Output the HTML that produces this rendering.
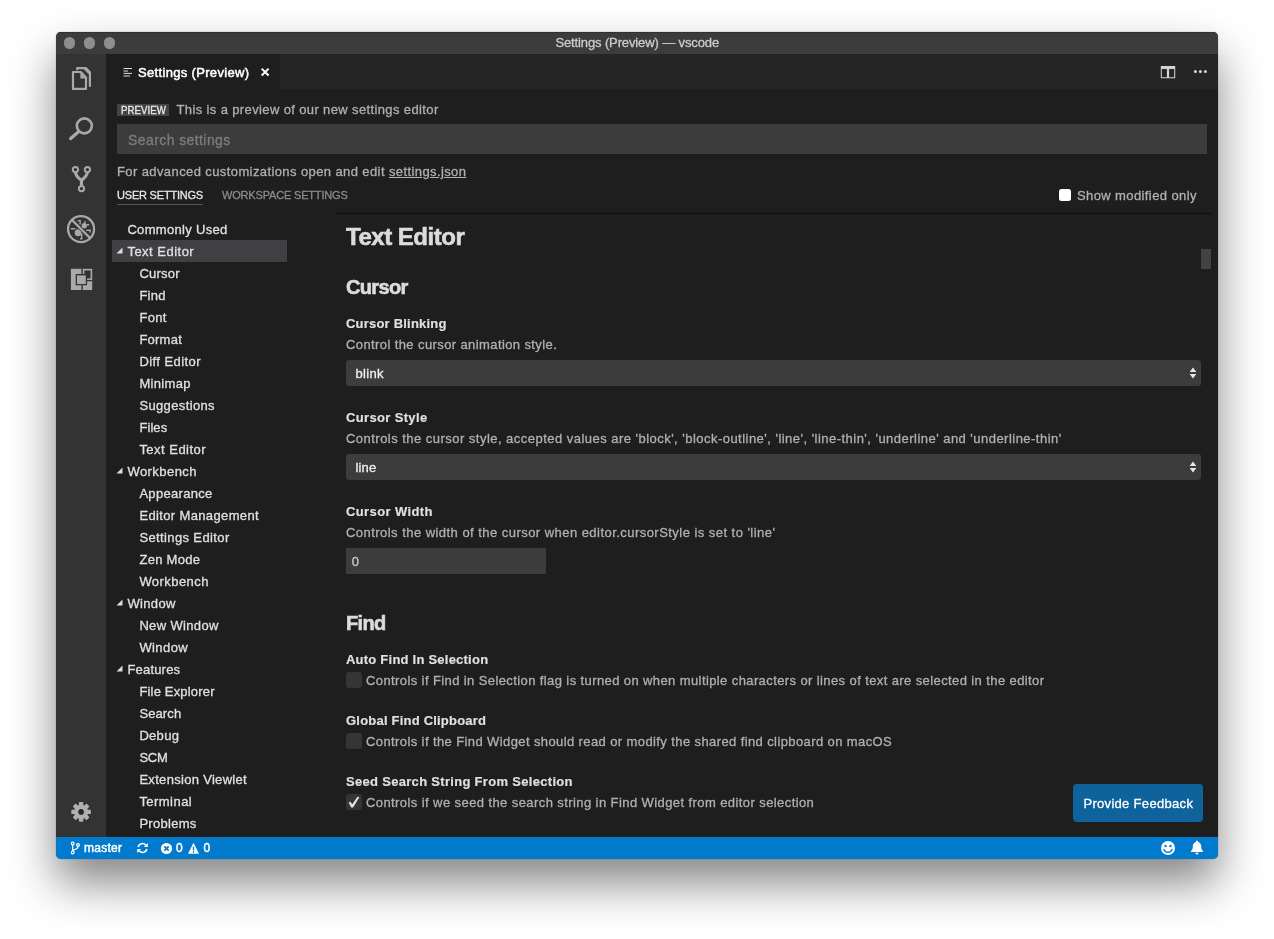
<!DOCTYPE html>
<html lang="en">
<head>
<meta charset="utf-8">
<title>Settings (Preview) — vscode</title>
<style>
*{box-sizing:border-box;margin:0;padding:0}
html,body{width:1274px;height:939px;background:#fff;overflow:hidden}
body{font-family:"Liberation Sans",sans-serif;font-size:13px;color:#ccc;position:relative}
.abs{position:absolute}
#win{position:absolute;left:56px;top:32px;width:1162px;height:827px;background:linear-gradient(#3c3c3c 0,#3c3c3c 20px,#1e1e1e 20px,#1e1e1e 807px,#007acc 807px);border-radius:5px;
 box-shadow:0 24px 46px rgba(0,0,0,.48),0 0 1px rgba(0,0,0,.6);}
#clip{position:absolute;inset:0;border-radius:5px;overflow:hidden;will-change:transform}
#titlebar{position:absolute;left:0;top:0;width:1162px;height:22px;background:#3c3c3c;box-shadow:inset 0 1px 0 #313131;text-align:center;line-height:22px;font-size:13px;color:#ccc}
.tl{position:absolute;top:5.450px;width:11.200px;height:11.200px;border-radius:50%;background:#8e8e90}
#activity{position:absolute;left:0;top:22px;width:50px;height:783px;background:#333}
#tabs{position:absolute;left:50px;top:22px;width:1112px;height:35px;background:#252526}
#tab{position:absolute;left:0;top:0;width:174px;height:35px;background:#1e1e1e;color:#fff}
#status{position:absolute;left:0;top:805px;width:1162px;height:22px;background:#007acc;color:#fff;font-size:12px;line-height:22px}
#status .t{-webkit-text-stroke:0.45px}
#tabt{-webkit-text-stroke:0.5px}
.t{position:absolute;white-space:nowrap;line-height:16px;-webkit-text-stroke:0.3px}
.tree .t{color:#e0e0e0;font-size:13px}
.h{font-weight:bold;color:#e0e0e0;-webkit-text-stroke:0.15px}
.hh{color:#dcdcdc;-webkit-text-stroke:0.6px}
.d{color:#b0b0b0}
.sel{position:absolute;left:290px;width:855px;height:26px;background:#3c3c3c;border-radius:3px}
.cb{position:absolute;left:290px;width:16px;height:16px;background:#353535;border-radius:3px}
</style>
</head>
<body>
<div id="win"><div id="clip">
 <div id="titlebar"><span class="t" id="ttl" style="left:499.400px;top:3px;letter-spacing:-0.122px">Settings (Preview) — vscode</span>
  <div class="tl" style="left:8.300px"></div><div class="tl" style="left:28.250px"></div><div class="tl" style="left:48.200px"></div>
 </div>
 <div id="activity"></div>
 <!-- activity bar icons -->
 <svg class="abs" style="left:0;top:22px" width="50" height="783" viewBox="0 22 50 783">
  <g fill="none" stroke="#a9a9a9">
   <!-- files -->
   <path d="M17 40h7.800l5.200 5.500v11.400h-13z" stroke-width="2.200" stroke-linejoin="round"/>
   <path d="M24.400 40.600v5.900h5.400z" fill="#a9a9a9" stroke="none"/>
   <path d="M21.200 37.300v-1.200h8.300l4.400 4.700v13.200" stroke-width="2.200" stroke-linejoin="round" stroke-linecap="round"/>
   <path d="M29.300 36.400l4.300 4.500" stroke-width="3.400"/>
   <!-- search -->
   <circle cx="28.350" cy="93.850" r="7.500" stroke-width="2.600"/>
   <path d="M22.800 99.500L14.700 106.600" stroke-width="3.300" stroke-linecap="round"/>
   <!-- git -->
   <path d="M19.400 140q0.200 4.200 6.100 8.400v5.600M31.400 140q-0.200 4.200-6.100 8.400" stroke-width="3.200" stroke-linejoin="round"/>
   <circle cx="19.400" cy="137.600" r="2.650" stroke-width="1.900" fill="#333"/>
   <circle cx="31.400" cy="137.600" r="2.650" stroke-width="1.900" fill="#333"/>
   <circle cx="25.500" cy="156.600" r="2.650" stroke-width="1.900" fill="#333"/>
   <!-- debug -->
   <ellipse cx="22.100" cy="200.700" rx="3.400" ry="3.500" fill="#a9a9a9" stroke="none"/>
   <circle cx="28.300" cy="193.800" r="2.700" fill="#a9a9a9" stroke="none"/>
   <path d="M21.600 188.600h2.500v3.800M29.200 189.200l-0.800 3.400M31 192.700h2.200M30.300 198.200h3.800v2.300M14.800 196.800h4.400M25.700 201.500v5.200h-1.600" stroke-width="1.400"/>
   <path d="M16 188L34 206" stroke="#333" stroke-width="3.800"/>
   <path d="M16 188L34 206" stroke-width="2.400"/>
   <circle cx="25.050" cy="197.100" r="13" stroke-width="2.300"/>
  </g>
  <!-- extensions -->
  <rect x="14.900" y="236.800" width="21.300" height="21.200" fill="#a9a9a9"/>
  <path d="M25.400 236.800h1.400v6h-1.400zM25.400 252h1.400v6h-1.400zM30 248h6.200v1.300h-6.200zM28.400 238.500h6.200v8.100h-6.200zM19.700 242.100h11.400v11.200h-11.400z" fill="#333"/>
  <rect x="21" y="243.400" width="8.800" height="8.600" fill="#a9a9a9"/>
  <!-- gear -->
  <g transform="translate(25.100 779.900)" fill="#b0b0b0">
   <circle r="7.100"/>
   <g id="teeth"><rect x="-2.200" y="-9.800" width="4.400" height="19.600" rx="0.800"/><rect x="-2.200" y="-9.800" width="4.400" height="19.600" rx="0.800" transform="rotate(45)"/><rect x="-2.200" y="-9.800" width="4.400" height="19.600" rx="0.800" transform="rotate(90)"/><rect x="-2.200" y="-9.800" width="4.400" height="19.600" rx="0.800" transform="rotate(135)"/></g>
   <circle r="2.800" fill="#262626"/>
  </g>
 </svg>

 <div id="tabs"><div id="tab"><span class="t" id="tabt" style="left:32px;top:11px;color:#fff;letter-spacing:0.329px">Settings (Preview)</span></div></div>

 <svg class="abs" style="left:66px;top:34px" width="12" height="12" viewBox="0 0 12 12"><path d="M1.500 2.500h8.500M1.500 7.400h8.500" stroke="#e0e0e0" stroke-width="1"/><path d="M1.500 5h4.500M1.500 10.100h6.400" stroke="#a0a0a0" stroke-width="1.500"/></svg>
 <svg class="abs" style="left:204px;top:35px" width="10" height="10" viewBox="0 0 10 10"><path d="M1.700 1.600L8.600 8.500M8.600 1.600L1.700 8.500" stroke="#fff" stroke-width="2"/></svg>
 <svg class="abs" style="left:1104px;top:33px" width="16" height="14" viewBox="0 0 16 14"><path d="M0.800 0.900h14.400v12.300h-14.400z" fill="#d4d4d4"/><path d="M1.800 3.900h5.100v8.300h-5.100zM9.100 3.900h5.100v8.300h-5.100z" fill="#252526"/></svg>
 <svg class="abs" style="left:1136px;top:36px" width="18" height="8" viewBox="0 0 18 8"><circle cx="3.400" cy="3.500" r="1.500" fill="#d4d4d4"/><circle cx="8.400" cy="3.500" r="1.500" fill="#d4d4d4"/><circle cx="13.400" cy="3.500" r="1.500" fill="#d4d4d4"/></svg>

 <!-- header -->
 <div class="abs" style="left:61px;top:72px;width:52px;height:12px;background:#444"></div>
 <span class="t" id="pv" style="left:64.500px;top:70px;font-size:11px;color:#ececec;transform-origin:0 50%;transform:scaleX(0.884)">PREVIEW</span>
 <span class="t d" id="pvt" style="left:120.500px;top:70px;letter-spacing:0.373px">This is a preview of our new settings editor</span>
 <div class="abs" style="left:61px;top:92px;width:1090px;height:30px;background:#3c3c3c"></div>
 <span class="t" id="srch" style="left:72px;top:100px;font-size:14px;color:#7d7d7d;letter-spacing:0.413px">Search settings</span>
 <span class="t d" id="adv" style="left:61px;top:132px;letter-spacing:0.400px">For advanced customizations open and edit <u>settings.json</u></span>
 <span class="t" id="us" style="left:61px;top:155px;font-size:11px;color:#e7e7e7;letter-spacing:-0.202px">USER SETTINGS</span>
 <div class="abs" style="left:61px;top:172px;width:86px;height:1px;background:#585858"></div>
 <span class="t" id="ws" style="left:166px;top:155px;font-size:11px;color:#8b8b8b;letter-spacing:-0.176px">WORKSPACE SETTINGS</span>
 <div class="abs" style="left:1003px;top:157px;width:12px;height:12px;background:#fff;border-radius:2.5px"></div>
 <span class="t d" id="smo" style="left:1021px;top:155.700px;letter-spacing:0.393px">Show modified only</span>
 <div class="abs" style="left:280px;top:181px;width:876px;height:1px;background:#111;box-shadow:0 0 1px rgba(0,0,0,.35)"></div>

 <!-- tree -->
 <div class="tree" id="tree">
  <div class="abs" style="left:56px;top:208px;width:175px;height:22px;background:#3f3f44"></div>
  <span class="t" id="tr0" style="left:71.4px;top:190px;letter-spacing:0.316px">Commonly Used</span>
  <svg class="abs" style="left:60px;top:214.5px" width="7" height="7" viewBox="0 0 7 7"><path d="M6.5 0.5v6h-6z" fill="#dcdcdc"/></svg>
  <span class="t" id="tr1" style="left:71.4px;top:212px;letter-spacing:0.489px">Text Editor</span>
  <span class="t" id="tr2" style="left:83.4px;top:234px;letter-spacing:0.247px">Cursor</span>
  <span class="t" id="tr3" style="left:83.4px;top:256px;letter-spacing:0.226px">Find</span>
  <span class="t" id="tr4" style="left:83.4px;top:278px;letter-spacing:0.296px">Font</span>
  <span class="t" id="tr5" style="left:83.4px;top:300px;letter-spacing:0.238px">Format</span>
  <span class="t" id="tr6" style="left:83.4px;top:322px;letter-spacing:0.432px">Diff Editor</span>
  <span class="t" id="tr7" style="left:83.4px;top:344px;letter-spacing:0.325px">Minimap</span>
  <span class="t" id="tr8" style="left:83.4px;top:366px;letter-spacing:0.367px">Suggestions</span>
  <span class="t" id="tr9" style="left:83.4px;top:388px;letter-spacing:0.089px">Files</span>
  <span class="t" id="tr10" style="left:83.4px;top:410px;letter-spacing:0.480px">Text Editor</span>
  <svg class="abs" style="left:60px;top:434.5px" width="7" height="7" viewBox="0 0 7 7"><path d="M6.5 0.5v6h-6z" fill="#dcdcdc"/></svg>
  <span class="t" id="tr11" style="left:71.4px;top:432px;letter-spacing:0.454px">Workbench</span>
  <span class="t" id="tr12" style="left:83.4px;top:454px;letter-spacing:0.307px">Appearance</span>
  <span class="t" id="tr13" style="left:83.4px;top:476px;letter-spacing:0.362px">Editor Management</span>
  <span class="t" id="tr14" style="left:83.4px;top:498px;letter-spacing:0.377px">Settings Editor</span>
  <span class="t" id="tr15" style="left:83.4px;top:520px;letter-spacing:0.294px">Zen Mode</span>
  <span class="t" id="tr16" style="left:83.4px;top:542px;letter-spacing:0.443px">Workbench</span>
  <svg class="abs" style="left:60px;top:566.5px" width="7" height="7" viewBox="0 0 7 7"><path d="M6.5 0.5v6h-6z" fill="#dcdcdc"/></svg>
  <span class="t" id="tr17" style="left:71.4px;top:564px;letter-spacing:0.358px">Window</span>
  <span class="t" id="tr18" style="left:83.4px;top:586px;letter-spacing:0.344px">New Window</span>
  <span class="t" id="tr19" style="left:83.4px;top:608px;letter-spacing:0.408px">Window</span>
  <svg class="abs" style="left:60px;top:632.5px" width="7" height="7" viewBox="0 0 7 7"><path d="M6.5 0.5v6h-6z" fill="#dcdcdc"/></svg>
  <span class="t" id="tr20" style="left:71.4px;top:630px;letter-spacing:0.198px">Features</span>
  <span class="t" id="tr21" style="left:83.4px;top:652px;letter-spacing:0.179px">File Explorer</span>
  <span class="t" id="tr22" style="left:83.4px;top:674px;letter-spacing:0.116px">Search</span>
  <span class="t" id="tr23" style="left:83.4px;top:696px;letter-spacing:0.297px">Debug</span>
  <span class="t" id="tr24" style="left:83.4px;top:718px;letter-spacing:-0.230px">SCM</span>
  <span class="t" id="tr25" style="left:83.4px;top:740px;letter-spacing:0.307px">Extension Viewlet</span>
  <span class="t" id="tr26" style="left:83.4px;top:762px;letter-spacing:0.459px">Terminal</span>
  <span class="t" id="tr27" style="left:83.4px;top:784px;letter-spacing:0.285px">Problems</span>
 </div>

 <!-- content -->
 <div id="content">
  <span class="t h hh" id="h1" style="left:290px;top:190px;font-size:24px;line-height:30px;letter-spacing:-0.478px">Text Editor</span>
  <span class="t h hh" id="h2a" style="left:290px;top:243px;font-size:20px;line-height:24px;letter-spacing:-0.646px">Cursor</span>

  <span class="t h" id="s1" style="left:290px;top:284px;letter-spacing:0.206px">Cursor Blinking</span>
  <span class="t d" id="s1d" style="left:290px;top:305px;letter-spacing:0.398px">Control the cursor animation style.</span>
  <div class="sel" style="top:328px"></div>
  <span class="t" id="s1v" style="left:299.400px;top:334px;color:#f0f0f0;letter-spacing:0.370px">blink</span>
  <svg class="abs" style="left:1133px;top:335px" width="8" height="12" viewBox="0 0 8 12"><path d="M4 0.4L7.3 5H0.7zM4 11.6L7.3 7H0.7z" fill="#e8e8e8"/></svg>

  <span class="t h" id="s2" style="left:290px;top:378px;letter-spacing:0.349px">Cursor Style</span>
  <span class="t d" id="s2d" style="left:290px;top:399px;letter-spacing:0.471px">Controls the cursor style, accepted values are 'block', 'block-outline', 'line', 'line-thin', 'underline' and 'underline-thin'</span>
  <div class="sel" style="top:422px"></div>
  <span class="t" id="s2v" style="left:299.400px;top:428px;color:#f0f0f0;letter-spacing:0.162px">line</span>
  <svg class="abs" style="left:1133px;top:429px" width="8" height="12" viewBox="0 0 8 12"><path d="M4 0.4L7.3 5H0.7zM4 11.6L7.3 7H0.7z" fill="#e8e8e8"/></svg>

  <span class="t h" id="s3" style="left:290px;top:472px;letter-spacing:0.382px">Cursor Width</span>
  <span class="t d" id="s3d" style="left:290px;top:493px;letter-spacing:0.459px">Controls the width of the cursor when editor.cursorStyle is set to 'line'</span>
  <div class="abs" style="left:290px;top:516px;width:200px;height:26px;background:#3c3c3c"></div>
  <span class="t" id="s3v" style="left:295.700px;top:522px;color:#ccc">0</span>

  <span class="t h hh" id="h2b" style="left:290px;top:579px;font-size:20px;line-height:24px;letter-spacing:-0.680px">Find</span>

  <span class="t h" id="s4" style="left:290px;top:620px;letter-spacing:0.231px">Auto Find In Selection</span>
  <div class="cb" style="top:640px"></div>
  <span class="t d" id="s4d" style="left:310px;top:641px;letter-spacing:0.398px">Controls if Find in Selection flag is turned on when multiple characters or lines of text are selected in the editor</span>

  <span class="t h" id="s5" style="left:290px;top:681px;letter-spacing:0.210px">Global Find Clipboard</span>
  <div class="cb" style="top:701px"></div>
  <span class="t d" id="s5d" style="left:310px;top:702px;letter-spacing:0.397px">Controls if the Find Widget should read or modify the shared find clipboard on macOS</span>

  <span class="t h" id="s6" style="left:290px;top:742px;letter-spacing:0.305px">Seed Search String From Selection</span>
  <div class="cb" style="top:762px"></div>
  <svg class="abs" style="left:290px;top:762px" width="16" height="16" viewBox="0 0 16 16"><path d="M2.700 8.700L4.500 7.500L6.100 10.400L11.500 2.700L13.300 3.300L7.100 13.400H5.200z" fill="#e6e6e6"/></svg>
  <span class="t d" id="s6d" style="left:310px;top:763px;letter-spacing:0.414px">Controls if we seed the search string in Find Widget from editor selection</span>

  <div class="abs" style="left:1145px;top:217px;width:10px;height:20px;background:#424242"></div>
  <div class="abs" id="fb" style="left:1017px;top:752px;width:130px;height:38px;background:#0e639c;border-radius:4px"></div>
  <span class="t" id="fbt" style="left:1027.400px;top:763.700px;color:#fff;letter-spacing:0.314px">Provide Feedback</span>
 </div>

 <div id="status">
  <svg class="abs" style="left:14px;top:4px" width="11" height="14" viewBox="0 0 11 14"><g fill="none" stroke="#fff" stroke-width="1.200"><path d="M2.700 3.800v6.400M8 5.300q0 2.200-2.600 3t-2.700 2"/><circle cx="2.700" cy="2.600" r="1.400"/><circle cx="2.700" cy="11.400" r="1.400"/><circle cx="8" cy="4" r="1.400"/></g></svg>
  <span class="t" id="mst" style="left:28px;top:3px;font-size:12px;color:#fff;letter-spacing:0.269px">master</span>
  <svg class="abs" style="left:80px;top:5px" width="13" height="12" viewBox="0 0 13 12"><g fill="none" stroke="#fff" stroke-width="1.500"><path d="M2.200 5.200a4.300 4.300 0 0 1 7.600-2"/><path d="M10.800 6.800a4.300 4.300 0 0 1-7.600 2"/></g><path d="M11.800 1v4h-4zM1.200 11v-4h4z" fill="#fff"/></svg>
  <svg class="abs" style="left:104px;top:5px" width="13" height="13" viewBox="0 0 13 13"><circle cx="6.500" cy="6.500" r="5.600" fill="#fff"/><path d="M4.300 4.300l4.400 4.400M8.700 4.300l-4.400 4.400" stroke="#007acc" stroke-width="1.700"/></svg>
  <span class="t" id="e0" style="left:120px;top:3px;font-size:12px;color:#fff;letter-spacing:0.213px">0</span>
  <svg class="abs" style="left:131px;top:5px" width="13" height="13" viewBox="0 0 13 13"><path d="M6.500 0.800L12 11.800H1z" fill="#fff"/><path d="M6.500 4.500v4M6.500 9.300v1.400" stroke="#007acc" stroke-width="1.300"/></svg>
  <span class="t" id="w0" style="left:147.500px;top:3px;font-size:12px;color:#fff;letter-spacing:0.213px">0</span>
  <svg class="abs" style="left:1104px;top:3.300px" width="16" height="16" viewBox="0 0 16 16"><circle cx="8" cy="8" r="7" fill="#fff"/><circle cx="5.600" cy="6" r="1.200" fill="#007acc"/><circle cx="10.400" cy="6" r="1.200" fill="#007acc"/><path d="M3.800 8.800a4.300 4.300 0 0 0 8.400 0" fill="none" stroke="#007acc" stroke-width="1.400"/></svg>
  <svg class="abs" style="left:1134px;top:3px" width="14" height="15" viewBox="0 0 14 15"><path d="M7 0.800c0.800 0 1.200 0.500 1.200 1.200c2 0.600 3 2.300 3 4.500c0 2.500 0.500 3.600 1.800 4.600v0.800h-12v-0.800c1.300-1 1.800-2.100 1.800-4.600c0-2.200 1-3.900 3-4.500c0-0.700 0.400-1.200 1.200-1.200z" fill="#fff"/><path d="M5.400 12.800h3.200a1.600 1.600 0 0 1-3.200 0z" fill="#fff"/></svg>
 </div>
</div></div>
</body>
</html>
